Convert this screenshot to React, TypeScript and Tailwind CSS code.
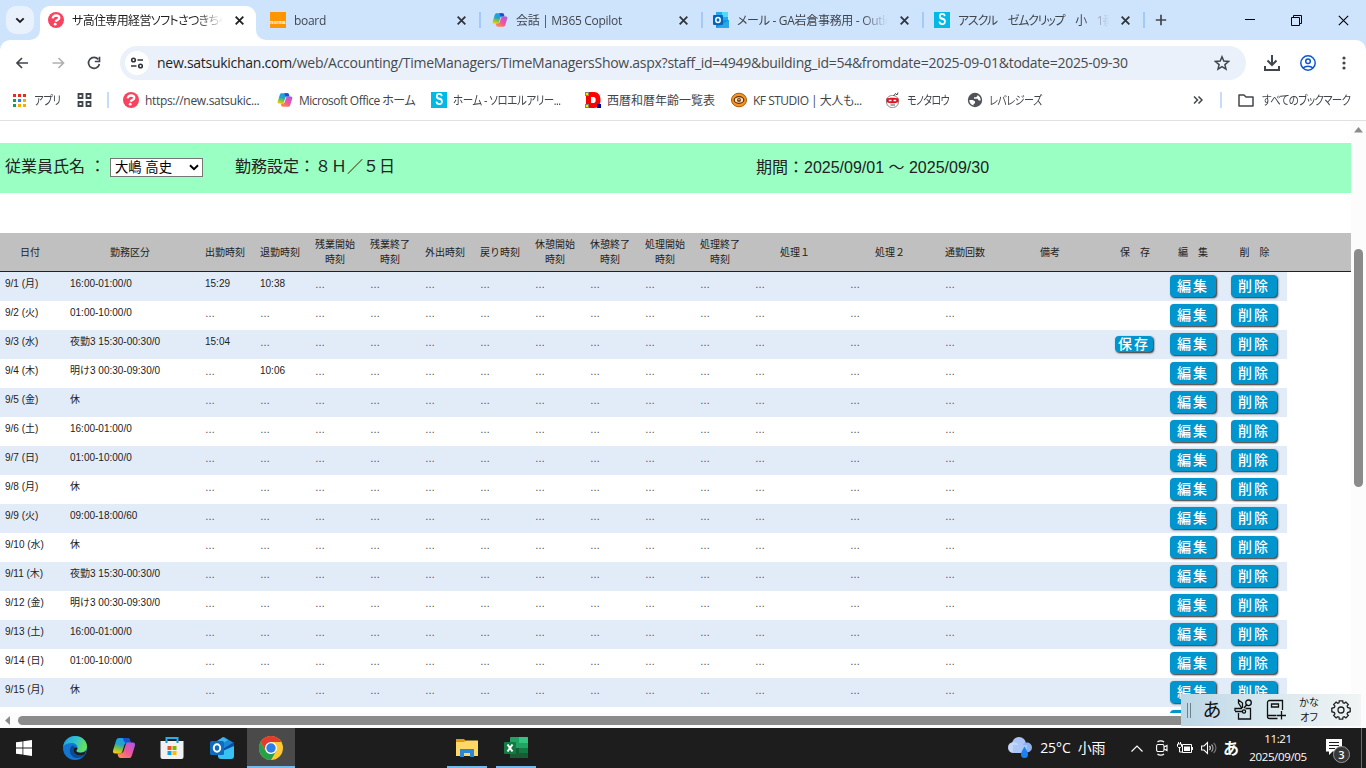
import * as React from "react";

const UI = "font-['Open_Sans','Noto_Sans_CJK_JP',sans-serif] [font-feature-settings:'palt']";
const COLS =
  "grid grid-cols-[60px_130px_repeat(10,50px)_90px_90px_50px_110px_50px_56px_57px] gap-x-[5px]";

/* ---------- icons ---------- */

function SatsukiIcon() {
  return (
    <svg width="16" height="16" viewBox="0 0 16 16" className="shrink-0">
      <circle cx="8" cy="8" r="8" fill="#f8435f" />
      <path
        d="M4.900 6.400c-.3-1.700 1.300-2.900 3.100-2.900s3.300 1 3.300 2.500c0 1.800-3 1.900-3.600 3.600"
        fill="none"
        stroke="#fff"
        strokeWidth="2.300"
      />
      <circle cx="7.200" cy="12.200" r="1.400" fill="#fff" />
    </svg>
  );
}

function NormaIcon() {
  return (
    <div className="flex h-4 w-4 shrink-0 items-end justify-center bg-[#ff9500] pb-[3px] font-['Liberation_Sans',sans-serif] text-[5px] leading-[5px] font-bold text-white">
      norma
    </div>
  );
}

function CopilotIcon({ size }: { size: number }) {
  const id = "cp" + size;
  return (
    <svg width={size} height={size} viewBox="0 0 24 24" className="shrink-0">
      <defs>
        <linearGradient id={id + "a"} x1="0.600" y1="0" x2="0.300" y2="1">
          <stop offset="0" stopColor="#1c9cf0" />
          <stop offset="0.450" stopColor="#22a5c8" />
          <stop offset="0.700" stopColor="#7cc142" />
          <stop offset="1" stopColor="#f6c915" />
        </linearGradient>
        <linearGradient id={id + "b"} x1="1" y1="0" x2="0" y2="1">
          <stop offset="0" stopColor="#a855f7" />
          <stop offset="0.500" stopColor="#f0569a" />
          <stop offset="1" stopColor="#ff9a3c" />
        </linearGradient>
      </defs>
      <path
        d="M7 2h8.500c1.300 0 2 .8 2.400 2l.8 2.800h-3.300c-1.800 0-2.600.9-3.100 2.500l-2 6.200c-.4 1.300-1.200 1.900-2.500 1.900H3c-1.800 0-2.400-1.600-1.900-3.200l3-9.600C4.600 2.900 5.500 2 7 2z"
        fill={`url(#${id}a)`}
      />
      <path d="M11 2h4.500c1.300 0 2 .8 2.400 2l.8 2.800h-5c-1.700 0-2.700-4.800-2.700-4.800z" fill="#1b4fd0" />
      <path
        d="M17 22H8.500c-1.300 0-2-.8-2.400-2l-.8-2.800h3.300c1.800 0 2.600-.9 3.100-2.500l2-6.200c.4-1.300 1.200-1.900 2.500-1.900H21c1.800 0 2.400 1.600 1.900 3.200l-3 9.600c-.5 1.700-1.400 2.600-2.900 2.600z"
        fill={`url(#${id}b)`}
      />
    </svg>
  );
}

function OutlookTabIcon() {
  return (
    <svg width="16" height="16" viewBox="0 0 16 16" className="shrink-0">
      <rect x="3" y="0" width="12" height="9" fill="#28a8ea" />
      <rect x="9" y="0" width="6" height="5" fill="#50d9ff" />
      <path d="M3 8h13v7a1 1 0 0 1-1 1H4a1 1 0 0 1-1-1z" fill="#1490df" />
      <path d="M3 16l13-8v7a1 1 0 0 1-1 1z" fill="#28a8ea" />
      <rect x="0" y="3" width="10" height="10" rx="1" fill="#0364b8" />
      <ellipse cx="5" cy="8" rx="2.200" ry="2.500" fill="none" stroke="#fff" strokeWidth="1.500" />
    </svg>
  );
}

function SoloelIcon() {
  return (
    <div className="flex h-4 w-4 shrink-0 items-center justify-center bg-[#00b9e4] font-['Liberation_Sans',sans-serif] text-[16px] leading-4 font-bold text-white">
      <span className="scale-x-75">S</span>
    </div>
  );
}

function CalendarDIcon() {
  return (
    <svg width="16" height="16" viewBox="0 0 16 16" className="shrink-0">
      <path d="M1 0h8c4 0 6.500 3 6.500 8s-2.500 8-6.500 8H1z" fill="#f00" />
      <path d="M6 5h2.500c1.500 0 2.200 1 2.200 3s-.7 3-2.200 3H6z" fill="#fff" />
      <rect x="0.500" y="0.500" width="3" height="3" fill="#ffe600" stroke="#886" />
      <rect x="0.500" y="12.500" width="3" height="3" fill="#ffe600" stroke="#886" />
      <rect x="12" y="12" width="4" height="4" fill="#0000a0" />
    </svg>
  );
}

function KfIcon() {
  return (
    <svg width="16" height="16" viewBox="0 0 16 16" className="shrink-0">
      <ellipse cx="8" cy="8" rx="7.500" ry="6.800" fill="#f7931e" stroke="#a85a0a" />
      <ellipse cx="8" cy="8" rx="4.800" ry="3.300" fill="#ffe3b8" stroke="#5b2f0c" strokeWidth="1.200" />
      <circle cx="8" cy="8" r="2" fill="#7a3f12" />
      <circle cx="8" cy="7.600" r="0.700" fill="#fff" />
    </svg>
  );
}

function MonotaroIcon() {
  return (
    <svg width="16" height="16" viewBox="0 0 16 16" className="shrink-0">
      <path d="M1.500 9.500C1.500 5.500 4 3.500 7.500 3.500s6 2 6 6-2.500 6-6 6-6-2-6-6z" fill="#fff" stroke="#888" />
      <path d="M1.500 6.500c3-1 9-1 12 0v3.500c-3 1.800-9 1.800-12 0z" fill="#e01020" />
      <path d="M3.800 8.500h2.700M8.500 8.500h2.700" stroke="#fff" strokeWidth="1.400" />
      <path d="M8.500 4l2-2.500 1.500 1.500 1-2.500" fill="none" stroke="#444" />
      <path d="M5.500 13h4.500" stroke="#555" />
    </svg>
  );
}

function GlobeIcon() {
  return (
    <svg width="16" height="16" viewBox="0 0 16 16" className="shrink-0">
      <circle cx="8" cy="8" r="7.200" fill="#505357" />
      <path d="M2.300 8h3.500l2.200 1.500v1.700l-1.500.8v1.600C4 13 2.300 10.700 2.300 8zM10.500 2.900V4L9 5.200H7v1.600h3.500l1.200 1.700h2C13.800 6 12.500 3.900 10.500 2.900z" fill="#fff" />
    </svg>
  );
}

function Cross({ size = 9, width = 1.6, color = "#30343a" }: { size?: number; width?: number; color?: string }) {
  return (
    <svg width={size} height={size} viewBox="0 0 8 8" className="shrink-0">
      <path d="M.6.6l6.800 6.800M7.400.6L.6 7.400" stroke={color} strokeWidth={width} />
    </svg>
  );
}

/* ---------- browser frame ---------- */

const tabs = [
  { icon: <NormaIcon />, title: "board", cls: "tracking-[-0.3px]", width: "w-[222px]" },
  { icon: <CopilotIcon size={16} />, title: "会話 | M365 Copilot", cls: "tracking-[-0.3px]", width: "w-[221px]" },
  { icon: <OutlookTabIcon />, title: "メール - GA岩倉事務用 - Outlook", cls: "tracking-[-0.3px]", width: "w-[221px]" },
  { icon: <SoloelIcon />, title: "アスクル　ゼムクリップ　小　1番", cls: "tracking-[-1.2px]", width: "w-[221px]" },
];

const FADE = "[mask-image:linear-gradient(to_right,#000_125px,transparent_151px)]";

function TabStrip() {
  return (
    <div className={`flex h-10 bg-[#cee3fc] text-[12px] leading-4 text-[#41464c] ${UI}`}>
      <div className="mt-[6px] ml-[6px] flex h-7 w-7 items-center justify-center rounded-[10px] bg-[#e9f1fc]">
        <svg width="10" height="7" viewBox="0 0 10 7">
          <path d="M1.300 1.300L5 5l3.700-3.700" fill="none" stroke="#1f1f1f" strokeWidth="1.900" />
        </svg>
      </div>
      <div className="relative mt-[6px] ml-[6px] flex w-[216px] items-center rounded-t-[10px] bg-white pb-[6px] pl-2 text-[#1f1f1f]">
        <svg className="absolute bottom-0 -left-[10px]" width="10" height="10">
          <path d="M10 0v10H0a10 10 0 0 0 10-10z" fill="#fff" />
        </svg>
        <svg className="absolute -right-[10px] bottom-0" width="10" height="10">
          <path d="M0 0v10h10A10 10 0 0 1 0 0z" fill="#fff" />
        </svg>
        <SatsukiIcon />
        <span className={`mt-[2px] ml-2 w-[151px] overflow-hidden whitespace-nowrap tracking-[-0.65px] ${FADE}`}>
          サ高住専用経営ソフトさつきちゃん
        </span>
        <span className="ml-[12px] flex">
          <Cross color="#1f1f1f" />
        </span>
      </div>
      <div className="flex pl-[14px]">
        {tabs.map((tab) => (
          <div key={tab.title} className={`flex items-center ${tab.width}`}>
            {tab.icon}
            <span className={`mt-[2px] ml-2 w-[151px] overflow-hidden whitespace-nowrap ${FADE} ${tab.cls}`}>{tab.title}</span>
            <span className="ml-[12px] flex">
              <Cross />
            </span>
            <span className="ml-[13px] h-4 w-[2px] bg-[#a3caf8]" />
          </div>
        ))}
      </div>
      <div className="flex items-center">
        <svg width="12" height="12" viewBox="0 0 12 12">
          <path d="M6 .8v10.400M.8 6h10.400" stroke="#41464c" strokeWidth="1.700" />
        </svg>
      </div>
      <div className="ml-auto flex items-center pr-[17px]">
        <svg width="10" height="10" className="mr-9">
          <path d="M0 4.500h10" stroke="#000" />
        </svg>
        <svg width="11" height="11" className="mr-9">
          <path d="M.5 2.500h8v8h-8zM2.500 2.500v-2h8v8h-2" fill="none" stroke="#000" />
        </svg>
        <Cross size={11} width={0.8} color="#000" />
      </div>
    </div>
  );
}

function Toolbar() {
  return (
    <div className="bg-[#cee3fc]">
      <div className="flex h-10 items-end rounded-t-[10px] bg-white text-[#41464c]">
        <div className="flex h-[34px] w-[120px] items-center pl-[15px]">
          <svg width="14" height="12" viewBox="0 0 14 12">
            <path d="M13 6H2M7 1L2 6l5 5" fill="none" stroke="#41464c" strokeWidth="1.700" />
          </svg>
          <svg width="13" height="12" viewBox="0 0 13 12" className="ml-[23px]">
            <path d="M.5 6h11M6.500 1l5 5-5 5" fill="none" stroke="#aeb1b5" strokeWidth="1.700" />
          </svg>
          <svg width="14" height="14" viewBox="0 0 14 14" className="ml-[22px]">
            <path d="M11.300 3.400A5.500 5.500 0 1 0 12.400 8" fill="none" stroke="#41464c" strokeWidth="1.700" />
            <path d="M12.500.8v4.700H7.800" fill="none" stroke="#41464c" strokeWidth="1.700" />
          </svg>
        </div>
        <div className="flex h-[34px] w-[1126px] items-center rounded-full bg-[#eaf1fa] px-[5px]">
          <div className="flex h-6 w-6 items-center justify-center rounded-full bg-white">
            <svg width="14" height="12" viewBox="0 0 14 12" fill="none" stroke="#30343a" strokeWidth="1.600">
              <circle cx="3.500" cy="3" r="1.800" />
              <path d="M7.500 3H13M1 9h5.500" />
              <circle cx="10.500" cy="9" r="1.800" />
            </svg>
          </div>
          <p className={`ml-2 text-[14px] leading-5 tracking-[-0.27px] whitespace-nowrap text-[#474b50] ${UI}`}>
            <span className="text-[#1f1f1f]">new.satsukichan.com</span>
            /web/Accounting/TimeManagers/TimeManagersShow.aspx?staff_id=4949&amp;building_id=54&amp;fromdate=2025-09-01&amp;todate=2025-09-30
          </p>
          <svg width="16" height="16" viewBox="0 0 16 16" className="mr-[11px] ml-auto" fill="none" stroke="#41464c" strokeWidth="1.500">
            <path d="M8 1.800l1.800 4.300 4.700.4-3.600 3.100 1.100 4.600L8 11.700l-4 2.500 1.100-4.600L1.500 6.500l4.700-.4z" />
          </svg>
        </div>
        <div className="flex h-[34px] flex-1 items-center pl-[18px]">
          <svg width="16" height="16" viewBox="0 0 16 16" fill="none" stroke="#41464c" strokeWidth="2">
            <path d="M8 0v9.500M3.500 5.500L8 10l4.500-4.500M1 11v4h14v-4" />
          </svg>
          <svg width="16" height="16" viewBox="0 0 16 16" className="ml-5" fill="none" stroke="#0b57d0" strokeWidth="1.500">
            <circle cx="8" cy="8" r="7.200" />
            <circle cx="8" cy="6.300" r="2.300" />
            <path d="M3 13c2.500-2.500 7.500-2.500 10 0" />
          </svg>
          <svg width="4" height="16" viewBox="0 0 4 16" className="ml-[26px]" fill="#41464c">
            <circle cx="2" cy="3" r="1.600" />
            <circle cx="2" cy="8" r="1.600" />
            <circle cx="2" cy="13" r="1.600" />
          </svg>
        </div>
      </div>
    </div>
  );
}

const appDots = ["#ea2a1a", "#ea2a1a", "#ea2a1a", "#12a05c", "#1a8cf0", "#fbab00", "#12a05c", "#fbab00", "#fbab00"];

function Bookmarks() {
  return (
    <div className={`flex h-[41px] items-center border-b border-[#dfe1e5] bg-white pl-[13px] text-[12px] leading-4 whitespace-nowrap text-[#41464c] ${UI}`}>
      <div className="flex w-[64px] items-center">
        <div className="grid grid-cols-3 gap-[2px]">
          {appDots.map((c, i) => (
            <span key={i} className="h-[3px] w-[3px]" style={{ backgroundColor: c }} />
          ))}
        </div>
        <span className="mt-[2px] ml-2 origin-left scale-x-[0.86] tracking-[-0.3px]">アプリ</span>
      </div>
      <svg width="15" height="14" viewBox="0 0 15 14" fill="none" stroke="#41464c" strokeWidth="1.800">
        <path d="M1.500 1h4v4h-4zM9.500 1h4v4h-4zM1.500 9h4v4h-4zM9.500 9h4v4h-4z" />
      </svg>
      <span className="ml-[15px] h-4 w-[2px] bg-[#c7dcf8]" />
      <div className="ml-[14px] flex w-[154px] items-center gap-[6px]">
        <SatsukiIcon />
        <span className="mt-[2px] tracking-[-0.32px]">https://new.satsukic...</span>
      </div>
      <div className="flex w-[154px] items-center gap-[6px]">
        <CopilotIcon size={16} />
        <span className="mt-[2px] tracking-[-0.52px]">Microsoft Office ホーム</span>
      </div>
      <div className="flex w-[154px] items-center gap-[6px]">
        <SoloelIcon />
        <span className="mt-[2px] origin-left scale-x-[0.88] tracking-[-0.55px]">ホーム - ソロエルアリー...</span>
      </div>
      <div className="flex w-[146px] items-center gap-[6px]">
        <CalendarDIcon />
        <span className="mt-[2px]">西暦和暦年齢一覧表</span>
      </div>
      <div className="flex w-[154px] items-center gap-[6px]">
        <KfIcon />
        <span className="mt-[2px] tracking-[-0.5px]">KF STUDIO | 大人も...</span>
      </div>
      <div className="flex w-[82px] items-center gap-[6px]">
        <MonotaroIcon />
        <span className="mt-[2px] origin-left scale-x-[0.84] tracking-[-0.7px]">モノタロウ</span>
      </div>
      <div className="flex items-center gap-[6px]">
        <GlobeIcon />
        <span className="mt-[2px] origin-left scale-x-[0.84] tracking-[-0.6px]">レバレジーズ</span>
      </div>
      <div className="ml-auto flex items-center">
        <svg width="10" height="8" viewBox="0 0 10 8" fill="none" stroke="#41464c" strokeWidth="1.500">
          <path d="M1 .5L4.500 4 1 7.500M5.500.5L9 4 5.500 7.500" />
        </svg>
        <span className="ml-[17px] h-4 w-[2px] bg-[#c7dcf8]" />
        <svg width="16" height="13" viewBox="0 0 16 13" className="mr-2 ml-4" fill="none" stroke="#41464c" strokeWidth="1.500">
          <path d="M1 1h5l2 2h7v9H1z" strokeLinejoin="round" />
        </svg>
        <span className="mt-[2px] w-[104px] origin-left scale-x-[0.88] tracking-[-0.8px]">すべてのブックマーク</span>
      </div>
    </div>
  );
}

/* ---------- time sheet ---------- */

const headers = [
  "日付", "勤務区分", "出勤時刻", "退勤時刻", "残業開始時刻", "残業終了時刻", "外出時刻", "戻り時刻",
  "休憩開始時刻", "休憩終了時刻", "処理開始時刻", "処理終了時刻", "処理１", "処理２", "通勤回数",
  "備考", "保　存", "編　集", "削　除",
];

type Day = { date: string; shift: string; start?: string; end?: string; save?: boolean };

const days: Day[] = [
  { date: "9/1 (月)", shift: "16:00-01:00/0", start: "15:29", end: "10:38" },
  { date: "9/2 (火)", shift: "01:00-10:00/0" },
  { date: "9/3 (水)", shift: "夜勤3 15:30-00:30/0", start: "15:04", save: true },
  { date: "9/4 (木)", shift: "明け3 00:30-09:30/0", end: "10:06" },
  { date: "9/5 (金)", shift: "休" },
  { date: "9/6 (土)", shift: "16:00-01:00/0" },
  { date: "9/7 (日)", shift: "01:00-10:00/0" },
  { date: "9/8 (月)", shift: "休" },
  { date: "9/9 (火)", shift: "09:00-18:00/60" },
  { date: "9/10 (水)", shift: "休" },
  { date: "9/11 (木)", shift: "夜勤3 15:30-00:30/0" },
  { date: "9/12 (金)", shift: "明け3 00:30-09:30/0" },
  { date: "9/13 (土)", shift: "16:00-01:00/0" },
  { date: "9/14 (日)", shift: "01:00-10:00/0" },
  { date: "9/15 (月)", shift: "休" },
];

function Btn({ label, small }: { label?: string; small?: boolean }) {
  const size = small
    ? "mt-[6px] h-[16px] w-[38px] leading-[14px]"
    : "mt-[3px] h-[22px] w-[46px] leading-[20px]";
  return (
    <button
      className={`ml-[5px] block rounded-[4px] bg-[#0095cd] text-center text-[14px] font-medium tracking-[2px] whitespace-nowrap text-white shadow-[1px_1px_2px_#222] ${size}`}
    >
      {label}
    </button>
  );
}

function Row({ day, odd }: { day: Day; odd: boolean }) {
  // start and end stamps, then eleven columns that hold no value yet
  const cells = [day.start, day.end, ...Array(11).fill("")];
  return (
    <div className={`${COLS} h-[29px] w-[1287px] shrink-0 ${odd ? "bg-[#e2ecf8]" : "bg-white"}`}>
      <span className="pt-1 pl-[5px]">{day.date}</span>
      <span className="pt-1 pl-[5px]">{day.shift}</span>
      {cells.map((c, i) => (
        <span key={i} className={c ? "pt-1 pl-[5px]" : "pt-[5px] pl-[5px] text-[#444]"}>
          {c || "…"}
        </span>
      ))}
      <span />
      <div>{day.save && <Btn label="保存" small />}</div>
      <div>
        <Btn label="編集" />
      </div>
      <div>
        <Btn label="削除" />
      </div>
    </div>
  );
}

function Page() {
  return (
    <div className="flex min-w-0 flex-1 flex-col overflow-hidden bg-white font-['Liberation_Sans','Noto_Sans_CJK_JP',sans-serif] text-[#222]">
      <div className="mt-[22px] flex h-[50px] shrink-0 items-center bg-[#99ffc3] pl-[5px] text-[16px] whitespace-nowrap">
        <span className="w-[105px] pb-[2px]">従業員氏名 ：</span>
        <div className="mb-px flex h-[19px] w-[93px] items-center justify-between border border-[#767676] bg-white pr-[3px] pl-1 text-[13.33px] leading-4 text-black">
          <span>大嶋 高史</span>
          <svg width="10" height="7" viewBox="0 0 10 7">
            <path d="M1 1.200l4 4 4-4" fill="none" stroke="#000" strokeWidth="2" />
          </svg>
        </div>
        <span className="ml-8 w-[521px] pb-[2px]">勤務設定：８Ｈ／５日</span>
        <span>期間：2025/09/01 ～ 2025/09/30</span>
      </div>
      <div className="mt-10 h-[39px] shrink-0 border-b border-[#222] bg-[#c0c0c0] text-[10px] leading-[15px]">
        <div className={`${COLS} h-[38px]`}>
          {headers.map((h) => (
            <span key={h} className="flex items-center justify-center px-[5px] text-center">
              {h}
            </span>
          ))}
        </div>
      </div>
      <div className="flex min-h-0 flex-1 flex-col overflow-hidden text-[10px] leading-[15px] whitespace-nowrap">
        {days.map((d, i) => (
          <Row key={d.date} day={d} odd={i % 2 === 0} />
        ))}
        {/* top edge of the next row */}
        <div className={`${COLS} h-[6px] w-[1287px] overflow-hidden`}>
          <div className="col-start-18">
            <Btn />
          </div>
          <div>
            <Btn />
          </div>
        </div>
      </div>
    </div>
  );
}

/* ---------- taskbar ---------- */

function ImeBar() {
  return (
    <div className={`absolute top-[694px] left-[1181px] flex h-8 w-[180px] items-center bg-linear-to-r from-[#bcd7e6] via-[#d9e8ee] to-[#f1f4f4] text-[#111] ${UI}`}>
      <div className="ml-[6px] h-[15px] w-1 border-x border-[#71818a]" />
      <span className="ml-[11px] w-5 text-center text-[19px] leading-6">あ</span>
      <svg width="20" height="22" viewBox="0 0 20 22" className="ml-[12px]" fill="none" stroke="#111" strokeWidth="1.300">
        <path d="M4.500 14v6h12V9.500h-5M1 12V9.500h7M1 12.500h8M8 9.500L4.500 4V1l4 3v5M10 9l3-3.500" />
        <circle cx="14.500" cy="3.800" r="2.800" />
        <circle cx="10" cy="12.500" r="1.600" />
      </svg>
      <svg width="21" height="22" viewBox="0 0 21 22" className="ml-3" fill="none" stroke="#111" strokeWidth="1.300">
        <path d="M16.500 11V1.500h-13a2 2 0 0 0-2 2v14a2 2 0 0 0 2 2h8M1.500 16.500h9M5.500 5h7v3h-7zM15.500 12v8.500M11 16.500h9" />
      </svg>
      <div className="ml-[12px] w-5 text-center text-[10px] leading-[15px] whitespace-nowrap">
        かな
        <br />
        オフ
      </div>
      <svg width="20" height="20" viewBox="0 0 20 20" className="ml-[12px]" fill="none" stroke="#222" strokeWidth="1.300">
        <circle cx="10" cy="10" r="3" />
        <path d="M8.300.8h3.400l.3 2 1.200.5 1.700-1.200 2.400 2.400-1.200 1.700.5 1.200 2.600.9v3.400l-2.600.9-.5 1.200 1.200 1.700-2.400 2.400-1.700-1.200-1.200.5-.3 2H8.300l-.3-2-1.200-.5-1.700 1.200-2.400-2.400 1.200-1.700-.5-1.200-2.600-.9V8.300l2.600-.9.5-1.200-1.200-1.700 2.400-2.400 1.700 1.200L8 2.800z" />
      </svg>
    </div>
  );
}

function EdgeIcon() {
  return (
    <svg width="24" height="24" viewBox="0 0 24 24">
      <defs>
        <linearGradient id="edg1" x1="0" y1="0" x2="1" y2="0.300">
          <stop offset="0" stopColor="#1b9de2" />
          <stop offset="0.550" stopColor="#2fc3d0" />
          <stop offset="1" stopColor="#66e05a" />
        </linearGradient>
      </defs>
      <circle cx="12" cy="12" r="12" fill="#1277d3" />
      <path d="M.2 10.500C1.200 4.500 6 0 12 0c7 0 12 5 12 10.500 0 4-3 6.200-6.500 6.200-3 0-4.200-1-4.200-1.900 0-.8 1.300-1.300 1.300-3.200C14.600 9 12 7 8.500 7 5 7 2 8.500.2 10.500z" fill="url(#edg1)" />
      <path d="M9.200 9.800c-3 2-3.200 6.700-.7 9.700 3 3.600 9 3.600 13.700-1C19 20 14.500 20 12 17.500c-1.900-1.900-2-4.500-.5-5.700.8-.7-1-2.800-2.300-2z" fill="#0c4a97" />
      <path d="M11.500 11.800c.8-.6 3-.5 3 .8 0 1-1.200 1.400-1.200 2.200 0 .9 1.200 1.900 4.200 1.900 2 0 4.200-.7 5.400-2.200-.3 1.800-.7 2.800-1.700 4.200C18 19.800 14.500 19.900 12 17.500c-1.900-1.900-2-4.500-.5-5.700z" fill="#1d1d1d" />
    </svg>
  );
}

function StoreIcon() {
  return (
    <svg width="24" height="24" viewBox="0 0 24 24">
      <path d="M6.500 6V2h11v4" fill="none" stroke="#25b1e8" strokeWidth="2" />
      <path d="M.5 5h23v16a2 2 0 0 1-2 2h-19a2 2 0 0 1-2-2z" fill="#f1f1f1" />
      <path d="M7.500 10h4v4h-4z" fill="#f25022" />
      <path d="M12.500 10h4v4h-4z" fill="#7fba00" />
      <path d="M7.500 15h4v4h-4z" fill="#00a4ef" />
      <path d="M12.500 15h4v4h-4z" fill="#ffb900" />
      <path d="M5.500 5h2v2h-2zM16.500 5h2v2h-2z" fill="#1d93cf" />
    </svg>
  );
}

function OutlookIcon() {
  return (
    <svg width="24" height="24" viewBox="0 0 24 24">
      <path d="M3 8L14 1l10 6v4L12 18 3 14z" fill="#1787d6" />
      <path d="M4 7l9-6 5 3-11 7z" fill="#3fb4ee" />
      <path d="M13 13l11-7v7l-9 5z" fill="#0a4fa0" />
      <path d="M8 17l16-7v10a3 3 0 0 1-3 3H11a3 3 0 0 1-3-3z" fill="#37c2f1" />
      <rect x="0" y="5" width="14" height="14" rx="1.500" fill="#0f6cbd" />
      <ellipse cx="7" cy="12" rx="3.200" ry="3.700" fill="none" stroke="#fff" strokeWidth="2" />
    </svg>
  );
}

function ChromeIcon() {
  return (
    <svg width="24" height="24" viewBox="0 0 24 24">
      <circle cx="12" cy="12" r="12" fill="#fcc934" />
      <path d="M12 6h10.400a12 12 0 0 0-20.800 0l5.200 9z" fill="#e33b2e" />
      <path d="M1.600 6a12 12 0 0 0 10.400 18l5.200-9-5.200 3a6 6 0 0 1-5.200-3z" fill="#26a04b" />
      <circle cx="12" cy="12" r="6" fill="#fff" />
      <circle cx="12" cy="12" r="4.700" fill="#2f7de9" />
    </svg>
  );
}

function ExplorerIcon() {
  return (
    <svg width="22" height="18" viewBox="0 0 22 18">
      <path d="M0 0h8l2 2h-1v3H0z" fill="#e09a10" />
      <path d="M0 3h8l2-1.500h12V17H0z" fill="#ffd765" />
      <path d="M4 18v-8h14v8h-4v-4H8v4z" fill="#2b86d4" />
    </svg>
  );
}

function ExcelIcon() {
  return (
    <svg width="24" height="22" viewBox="0 0 24 22">
      <rect x="6" y="0" width="18" height="21" rx="1" fill="#21a366" />
      <path d="M15 0h8a1 1 0 0 1 1 1v5h-9z" fill="#33c481" />
      <path d="M6 11h9v10H7a1 1 0 0 1-1-1z" fill="#185c37" />
      <path d="M15 11h9v5h-9z" fill="#107c41" />
      <path d="M15 16h9v4a1 1 0 0 1-1 1h-8z" fill="#185c37" />
      <rect x="0" y="5" width="12" height="12" rx="1" fill="#107c41" />
      <path d="M3.500 7.500l5 7M8.500 7.500l-5 7" stroke="#fff" strokeWidth="2" />
    </svg>
  );
}

function Task({ children, cls }: { children: React.ReactNode; cls: string }) {
  return <div className={`flex h-10 items-center justify-center border-b-2 pt-[2px] ${cls}`}>{children}</div>;
}

function Taskbar() {
  return (
    <div className={`flex h-10 bg-[#1d1d1d] text-white ${UI}`}>
      <div className="flex w-[50px] items-center justify-center pr-[2px]">
        <svg width="16" height="16" viewBox="0 0 16 16" fill="#fff">
          <path d="M0 2.300L6.500 1.400v6.200H0zM7.300 1.300L16 0v7.600H7.300zM0 8.400h6.500v6.200L0 13.700zM7.300 8.400H16V16l-8.700-1.300z" />
        </svg>
      </div>
      <Task cls="w-[50px] border-transparent"><EdgeIcon /></Task>
      <Task cls="w-[48px] border-transparent"><CopilotIcon size={24} /></Task>
      <Task cls="w-[48px] border-transparent"><StoreIcon /></Task>
      <Task cls="w-[51px] border-transparent"><OutlookIcon /></Task>
      <Task cls="w-12 border-[#76b9ed] bg-[#4a4a4a]"><ChromeIcon /></Task>
      <Task cls="ml-[152px] w-10 border-[#76b9ed]"><ExplorerIcon /></Task>
      <Task cls="ml-[9px] w-10 border-[#76b9ed]"><ExcelIcon /></Task>

      <div className="ml-auto flex items-center">
        <svg width="24" height="22" viewBox="0 0 24 22">
          <circle cx="11" cy="7" r="7" fill="#a9c4f5" />
          <circle cx="5.500" cy="10.500" r="5.500" fill="#c3d6fa" />
          <circle cx="19" cy="10.500" r="5" fill="#8fb2ee" />
          <rect x="5" y="8" width="14" height="8" fill="#a9c6f7" />
          <path d="M16.500 9.500c1.500 3 3.500 5 3.500 8a3.500 3.500 0 0 1-7 0c0-3 2-5 3.500-8z" fill="#1e80f0" />
        </svg>
        <span className="ml-2 w-[66px] text-[14px] leading-5 tracking-[-0.1px] whitespace-nowrap">25°C&nbsp; 小雨</span>
        <svg width="12" height="7" viewBox="0 0 12 7" className="ml-[25px]" fill="none" stroke="#fff" strokeWidth="1.200">
          <path d="M.5 6.500L6 1l5.500 5.500" />
        </svg>
        <svg width="12" height="16" viewBox="0 0 12 16" className="ml-[13px]" fill="none" stroke="#fff" strokeWidth="1.100">
          <rect x="0.600" y="4.500" width="7.400" height="7" rx="1.500" />
          <path d="M8 7l3-1.500v5L8 9M1.500 2C3 .5 6.500.5 8 2M1.500 14c1.500 1.500 5 1.500 6.500 0" />
        </svg>
        <svg width="16" height="12" viewBox="0 0 16 12" className="ml-[9px]">
          <path d="M5.500 2.500h9v8h-9z" fill="none" stroke="#fff" />
          <path d="M15 5h1v3h-1zM7 4.500h6v4.500H7z" fill="#fff" />
          <path d="M.5 2h4v2.500l-1 1h-2l-1-1zM1.500 0v2M3.500 0v2M2.500 5.500V10h3" fill="none" stroke="#fff" />
        </svg>
        <svg width="17" height="14" viewBox="0 0 17 14" className="ml-2" fill="none" stroke="#fff" strokeWidth="1.100">
          <path d="M.6 5h2.400l3.500-3.500v11L3 9H.6zM8.500 5c1 1 1 3 0 4" />
          <path d="M10.500 3.500c2 2 2 5 0 7" stroke="#aaa" />
          <path d="M12.700 2c3 3 3 7 0 10" stroke="#777" />
        </svg>
        <span className="ml-[5px] text-[16px] leading-5 font-bold">あ</span>
        <div className="ml-2 w-[62px] text-center text-[11.5px] leading-[18px] tracking-[-0.35px]">
          11:21
          <br />
          2025/09/05
        </div>
        <div className="relative ml-[17px] h-7 w-[35px]">
          <svg width="16" height="16" viewBox="0 0 16 16" className="mt-[5px]">
            <path d="M0 0h16v12.500H6.500L3 16v-3.500H0z" fill="#fff" />
            <path d="M3 3.500h10M3 6.500h10M3 9.500h6" stroke="#1d1d1d" />
          </svg>
          <span className="absolute top-[12px] left-[7px] flex h-[17px] w-[17px] items-center justify-center rounded-full border border-[#999] bg-[#383838] text-[11px] leading-none font-semibold">
            3
          </span>
        </div>
        <span className="mr-1 h-10 w-px bg-[#6a6a6a]" />
      </div>
    </div>
  );
}

export default function App() {
  return (
    <div className="relative flex h-[768px] w-[1366px] flex-col overflow-hidden bg-white">
      <TabStrip />
      <Toolbar />
      <Bookmarks />
      <div className="flex min-h-0 flex-1">
        <Page />
        <div className="flex w-[15px] flex-col items-center bg-[#fcfcfc] pt-[6px]">
          <svg width="9" height="6" viewBox="0 0 9 6" fill="#8b8b8b">
            <path d="M0 5.500L4.500 0 9 5.500z" />
          </svg>
          <div className="mt-[116px] h-[238px] w-[9px] rounded-full bg-[#8b8b8b]" />
        </div>
      </div>
      <div className="flex h-[15px] items-center bg-[#fcfcfc] pl-[5px]">
        <svg width="5" height="9" viewBox="0 0 5 9" fill="#8b8b8b">
          <path d="M5 0L0 4.500 5 9z" />
        </svg>
        <div className="ml-2 h-[9px] w-[1200px] rounded-full bg-[#8b8b8b]" />
      </div>
      <Taskbar />
      <ImeBar />
    </div>
  );
}
